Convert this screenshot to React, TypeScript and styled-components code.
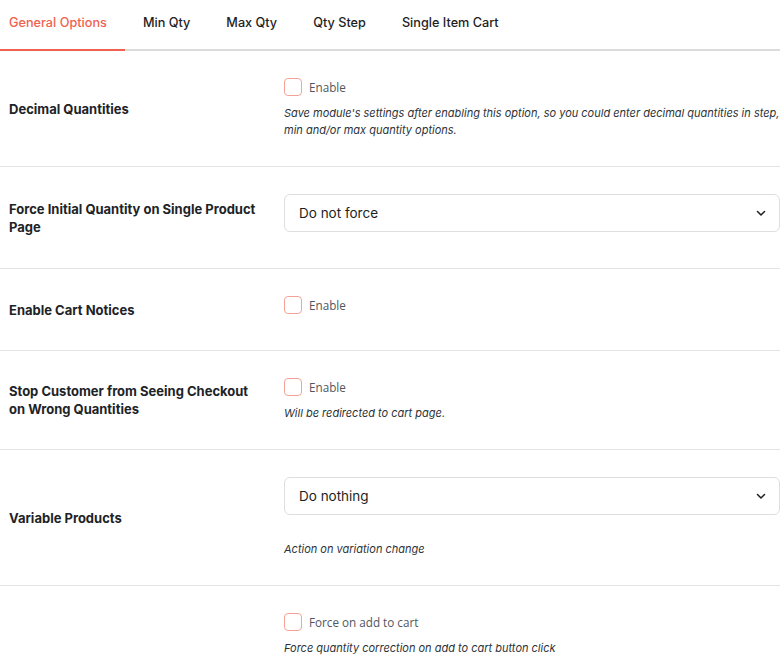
import React from "react";
import styled, { createGlobalStyle } from "styled-components";

const ACCENT = "#f0624f";
const BORDER = "#e4e4e4";

const Global = createGlobalStyle`
  html, body {
    margin: 0;
    padding: 0;
    background: #fff;
    overflow: hidden;
  }
  body {
    font-family: Inter, "Noto Sans", sans-serif;
    color: #1e1e1e;
  }
`;

const Page = styled.div`
  width: 780px;
`;

const TabBar = styled.nav`
  display: flex;
  height: 49px;
  border-bottom: 2px solid #dcdcdc;
  margin-left: -9px;
`;

const Tab = styled.div<{ $active?: boolean }>`
  display: flex;
  align-items: center;
  padding: 0 18px 5px;
  font-size: 12.7px;
  font-weight: 500;
  color: ${({ $active }) => ($active ? ACCENT : "#1e1e1e")};
  margin-bottom: -2px;
  border-bottom: 2px solid ${({ $active }) => ($active ? ACCENT : "transparent")};
  cursor: pointer;
`;

const Row = styled.div`
  display: grid;
  grid-template-columns: 250px 496px;
  column-gap: 25px;
  padding-left: 9px;
  border-bottom: 1px solid ${BORDER};
`;

const Label = styled.div`
  align-self: center;
  font-size: 13px;
  font-weight: 700;
  line-height: 18px;
  color: #1d2327;
`;

const Control = styled.div`
  padding: 27px 0;
`;

const CheckLine = styled.label`
  display: flex;
  align-items: flex-start;
  gap: 7px;
  height: 27px;
  font-family: "Open Sans", "Noto Sans", sans-serif;
  font-size: 11.7px;
  line-height: 18px;
  color: #50575e;
`;

const Box = styled.span`
  width: 16px;
  height: 16px;
  border: 1.5px solid #f4a497;
  border-radius: 4px;
  background: #fff;
  flex: none;
`;

const Desc = styled.p<{ $gap?: number }>`
  margin: ${({ $gap = 0 }) => $gap}px 0 0;
  font-size: 11px;
  font-style: italic;
  line-height: 17px;
  color: #2c3338;
`;

const Select = styled.div`
  display: flex;
  align-items: center;
  justify-content: space-between;
  box-sizing: border-box;
  height: 38px;
  margin-bottom: 9px;
  padding: 0 12px 0 14px;
  border: 1px solid #dedede;
  border-radius: 6px;
  font-size: 13.5px;
  color: #1e1e1e;
`;

const Chevron = () => (
  <svg width="12" height="12" viewBox="0 0 24 24" fill="none" stroke="#1e1e1e" strokeWidth="3" strokeLinecap="round" strokeLinejoin="round">
    <path d="M5 9l7 7 7-7" />
  </svg>
);

const Check = ({ text }: { text: string }) => (
  <CheckLine>
    <Box />
    {text}
  </CheckLine>
);

export default function App() {
  return (
    <Page>
      <Global />
      <TabBar>
        <Tab $active>General Options</Tab>
        <Tab>Min Qty</Tab>
        <Tab>Max Qty</Tab>
        <Tab>Qty Step</Tab>
        <Tab>Single Item Cart</Tab>
      </TabBar>

      <Row>
        <Label>Decimal Quantities</Label>
        <Control>
          <Check text="Enable" />
          <Desc>
            Save module's settings after enabling this option, so you could enter decimal quantities in step,
            min and/or max quantity options.
          </Desc>
        </Control>
      </Row>

      <Row>
        <Label>Force Initial Quantity on Single Product Page</Label>
        <Control>
          <Select>
            Do not force
            <Chevron />
          </Select>
        </Control>
      </Row>

      <Row>
        <Label>Enable Cart Notices</Label>
        <Control>
          <Check text="Enable" />
        </Control>
      </Row>

      <Row>
        <Label>Stop Customer from Seeing Checkout on Wrong Quantities</Label>
        <Control>
          <Check text="Enable" />
          <Desc>Will be redirected to cart page.</Desc>
        </Control>
      </Row>

      <Row>
        <Label>Variable Products</Label>
        <Control>
          <Select>
            Do nothing
            <Chevron />
          </Select>
          <Desc $gap={26}>Action on variation change</Desc>
        </Control>
      </Row>

      <Row>
        <Label></Label>
        <Control>
          <Check text="Force on add to cart" />
          <Desc>Force quantity correction on add to cart button click</Desc>
        </Control>
      </Row>
    </Page>
  );
}
